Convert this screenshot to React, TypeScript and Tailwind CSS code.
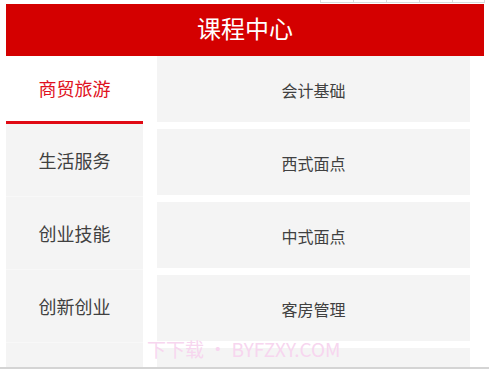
const categories = ['商贸旅游', '生活服务', '创业技能', '创新创业', '电子商务'];
const courses = ['会计基础', '西式面点', '中式面点', '客房管理', '酒店服务'];

const font = "font-['Noto_Sans_CJK_SC','Noto_Sans',sans-serif]";

export default function App() {
  const active = 0;
  return (
    <div className={`relative w-[489px] h-[371px] overflow-hidden bg-white ${font}`}>
      {/* top strip */}
      <div className="h-[4px] flex justify-end pr-[4px]">
        <div className="flex h-[3px] border-b border-[#d8dcdc]">
          {[0, 1, 2, 3, 4].map((i) => (
            <div key={i} className="w-[33px] border-l border-[#d8dcdc] last:border-r" />
          ))}
        </div>
      </div>

      <header className="ml-[6px] w-[478px] h-[52px] bg-[#d40000] flex justify-center pt-[7px]">
        <h1 className="text-white text-[24px] leading-[34px]">课程中心</h1>
      </header>

      <div className="flex h-[313px] border-b-2 border-[#d4d4d4] overflow-hidden">
        <nav className="ml-[6px] w-[137px] flex flex-col shrink-0">
          {categories.map((c, i) =>
            i === active ? (
              <div
                key={c}
                className="h-[68px] shrink-0 bg-white border-b-[3px] border-[#e00a14] flex items-center justify-center text-[18px] text-[#e01020]"
              >
                {c}
              </div>
            ) : (
              <div
                key={c}
                className="h-[73px] shrink-0 bg-[#f4f4f4] border-b border-[#f8f8f8] flex items-center justify-center text-[18px] text-[#404040]"
              >
                {c}
              </div>
            )
          )}
        </nav>

        <div className="ml-[14px] w-[313px] flex flex-col gap-[7px]">
          {courses.map((c) => (
            <div
              key={c}
              className="h-[66px] shrink-0 bg-[#f4f4f4] flex items-center justify-center pt-[2px] text-[16px] text-[#404040]"
            >
              {c}
            </div>
          ))}
        </div>
      </div>

      <div className="absolute left-[147px] top-[338px] text-[19px] leading-[22px] text-[#f7d6ef] pointer-events-none">
        下下载 · BYFZXY.COM
      </div>
    </div>
  );
}
